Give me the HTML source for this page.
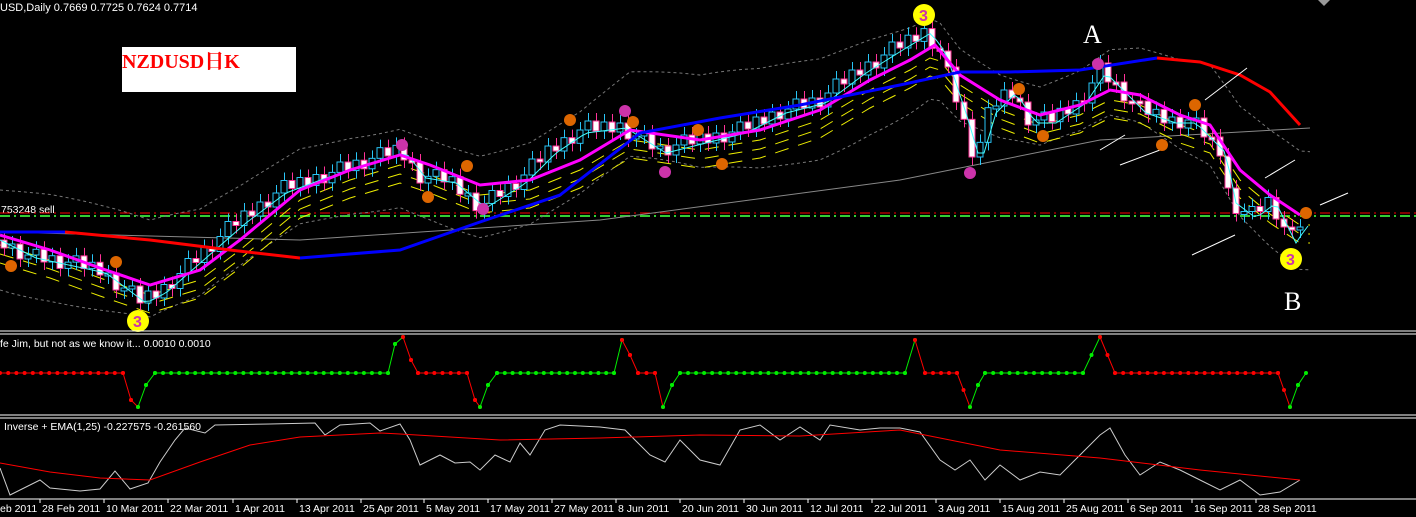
<!DOCTYPE html>
<html><head><meta charset="utf-8">
<style>
html,body{margin:0;padding:0;background:#000;width:1416px;height:517px;overflow:hidden}
svg{display:block}
text{font-family:"Liberation Sans","Noto Sans CJK SC",sans-serif;fill:#fff;font-size:10.5px}
</style></head><body>
<svg id="s" width="1416" height="517" viewBox="0 0 1416 517" xmlns="http://www.w3.org/2000/svg">
<rect width="1416" height="517" fill="#000"/>
<text x="0" y="11" style="font-size:11px">USD,Daily  0.7669 0.7725 0.7624 0.7714</text>
<rect x="122" y="47" width="174" height="45" fill="#fff"/>
<text x="122" y="68" style="font-family:'Liberation Serif','Noto Serif CJK SC',serif;font-size:20px;font-weight:bold;fill:#f00">NZDUSD日K</text>
<text x="1083" y="43" style="font-family:'Liberation Serif',serif;font-size:26px">A</text>
<text x="1284" y="310" style="font-family:'Liberation Serif',serif;font-size:26px">B</text>
<text x="1" y="213">753248 sell</text>
<line x1="0" y1="213" x2="1416" y2="213" stroke="#f00" stroke-dasharray="10,4,2,4"/>
<line x1="0" y1="216" x2="1416" y2="216" stroke="#3c3" stroke-width="2" stroke-dasharray="10,4,2,4"/>
<g id="bands"></g>
<g id="candles"></g>
<g id="mas"></g>
<g id="marks"></g>
<line x1="0" y1="331" x2="1416" y2="331" stroke="#fff"/>
<line x1="0" y1="334" x2="1416" y2="334" stroke="#fff"/>
<text x="0" y="347">fe Jim, but not as we know it...  0.0010 0.0010</text>
<g id="ind1"></g>
<line x1="0" y1="415" x2="1416" y2="415" stroke="#fff"/>
<line x1="0" y1="418" x2="1416" y2="418" stroke="#fff"/>
<text x="4" y="430">Inverse + EMA(1,25) -0.227575 -0.261560</text>
<g id="ind2"></g>
<line x1="0" y1="499" x2="1416" y2="499" stroke="#fff"/>
<g id="axis"></g>
<path d="M1318 0 L1330 0 L1324 6 Z" fill="#999"/>
</svg>
<script>
(function(){
var NS="http://www.w3.org/2000/svg";
function el(g,t,a){var e=document.createElementNS(NS,t);for(var k in a)e.setAttribute(k,a[k]);document.getElementById(g).appendChild(e);return e;}
function interp(p,x){for(var i=1;i<p.length;i++){if(x<=p[i][0]){var a=p[i-1],b=p[i];return a[1]+(b[1]-a[1])*(x-a[0])/(b[0]-a[0]);}}return p[p.length-1][1];}
function pts(p){return p.map(function(q){return q.join(",")}).join(" ")}
var price=[[0,240],[30,255],[100,270],[140,300],[160,290],[200,255],[240,220],[280,190],[320,175],[370,160],[400,150],[420,175],[450,180],[480,205],[520,180],[550,150],[580,130],[620,125],[660,150],[700,140],[740,130],[780,110],[820,100],[860,70],[900,45],[925,30],[940,50],[960,110],[975,160],[990,110],[1010,90],[1030,120],[1050,120],[1080,100],[1100,70],[1120,90],[1140,110],[1170,120],[1190,120],[1220,150],[1230,200],[1250,215],[1270,200],[1290,240],[1300,225],[1310,215]];
var mag=[[0,235],[50,250],[100,268],[150,285],[200,270],[240,240],[300,190],[350,170],[400,155],[430,165],[480,185],[530,180],[580,160],[630,130],[700,140],[760,130],[820,110],[870,80],[910,60],[935,45],[960,75],[1000,100],[1040,115],[1080,105],[1110,90],[1140,95],[1180,115],[1210,125],[1240,170],[1270,195],[1300,215]];
var ub=[],lb=[];
for(var x=0;x<=1310;x+=10){var m=interp(mag,x);ub.push([x,m-45-20*Math.sin(x/90)]);lb.push([x,m+40+15*Math.cos(x/70)]);}
el("bands","polyline",{points:pts(ub),fill:"none",stroke:"#777","stroke-dasharray":"3,3"});
el("bands","polyline",{points:pts(lb),fill:"none",stroke:"#777","stroke-dasharray":"3,3"});
el("bands","polyline",{points:"0,232 300,240 600,220 900,180 1100,140 1310,128",fill:"none",stroke:"#888"});
for(var k=0;k<3;k++){var q=[];for(var x=0;x<=1310;x+=10){q.push([x,interp(mag,x)+10+k*9]);}
el("bands","polyline",{points:pts(q),fill:"none",stroke:"#ee0","stroke-dasharray":"14,10"});}
var prev=interp(price,0);
for(var x=4;x<=1306;x+=8){var c=interp(price,x)+((x*37)%19-9);var o=prev;var t0=Math.min(o,c),b0=Math.max(o,c);if(b0-t0<3)b0=t0+3;
var isUp=c<o;var col=isUp?"#29c5f6":"#ff3399";
el("candles","line",{x1:x+0.5,y1:t0-8,x2:x+0.5,y2:b0+8,stroke:col});
el("candles","rect",{x:x-3,y:t0,width:6,height:b0-t0,fill:isUp?"#000":"#fff",stroke:col});prev=c;}
var cy=[];for(var x=0;x<=1310;x+=6)cy.push([x,interp(price,x-6)+3]);
el("mas","polyline",{points:pts(cy),fill:"none",stroke:"#4ff"});
el("mas","polyline",{points:pts(mag),fill:"none",stroke:"#f0f","stroke-width":3});
el("mas","polyline",{points:"0,232 65,232",fill:"none",stroke:"#00f","stroke-width":3});
el("mas","polyline",{points:"65,232 150,240 230,250 300,258",fill:"none",stroke:"#f00","stroke-width":3});
el("mas","polyline",{points:"300,258 400,250 480,222 560,195 640,133 720,118 800,105 900,85 960,72 1010,72 1080,70 1157,58",fill:"none",stroke:"#00f","stroke-width":3});
el("mas","polyline",{points:"1157,58 1200,62 1240,75 1270,92 1300,125",fill:"none",stroke:"#f00","stroke-width":3});
[[1205,100,1247,68],[1100,150,1125,135],[1120,165,1160,150],[1192,255,1235,235],[1265,178,1295,160],[1320,205,1348,193]].forEach(function(a){el("marks","line",{x1:a[0],y1:a[1],x2:a[2],y2:a[3],stroke:"#fff"});});
[[11,266,"#d60"],[116,262,"#d60"],[428,197,"#d60"],[467,166,"#d60"],[570,120,"#d60"],[633,122,"#d60"],[698,130,"#d60"],[722,164,"#d60"],[1019,89,"#d60"],[1043,136,"#d60"],[1162,145,"#d60"],[1195,105,"#d60"],[1306,213,"#d60"],[402,145,"#c3a"],[625,111,"#c3a"],[483,209,"#c3a"],[665,172,"#c3a"],[970,173,"#c3a"],[1098,64,"#c3a"]].forEach(function(m){el("marks","circle",{cx:m[0],cy:m[1],r:6,fill:m[2]});});
[[138,321],[924,15],[1291,259]].forEach(function(m){el("marks","circle",{cx:m[0],cy:m[1],r:11,fill:"#ff0"});var t=el("marks","text",{x:m[0]-5,y:m[1]+6,style:"fill:#c3a;font-size:16px;font-weight:bold"});t.textContent="3";});
var segs=[["r",[[0,373],[123,373],[131,400],[138,407]]],["g",[[138,407],[146,385],[155,373],[388,373],[395,344],[403,337]]],["r",[[403,337],[411,360],[418,373],[467,373],[475,400],[480,407]]],["g",[[480,407],[488,385],[497,373],[614,373],[622,340]]],["r",[[622,340],[630,355],[638,373],[655,373],[663,407]]],["g",[[663,407],[672,385],[680,373],[905,373],[915,340]]],["r",[[915,340],[925,373],[957,373],[970,407]]],["g",[[970,407],[978,385],[985,373],[1083,373],[1100,337]]],["r",[[1100,337],[1115,373],[1278,373],[1290,407]]],["g",[[1290,407],[1298,385],[1306,373]]]];
segs.forEach(function(s){var c=s[0]=="r"?"#f00":"#0e0";var p=s[1];el("ind1","polyline",{points:pts(p),fill:"none",stroke:c});
for(var i=0;i<p.length-1;i++){var a=p[i],b=p[i+1];var n=Math.max(1,Math.round((b[0]-a[0])/8));for(var j=0;j<=n;j++){el("ind1","circle",{cx:a[0]+(b[0]-a[0])*j/n,cy:a[1]+(b[1]-a[1])*j/n,r:2,fill:c});}}});
var wl=[[0,468],[10,495],[40,480],[50,488],[80,491],[100,489],[115,471],[130,489],[148,483],[160,462],[175,440],[185,428],[205,433],[215,425],[270,424],[315,423],[325,435],[340,425],[370,423],[380,431],[400,424],[410,440],[420,465],[440,455],[455,463],[470,462],[480,470],[495,455],[510,462],[520,443],[530,455],[545,430],[560,425],[600,427],[625,430],[650,455],[665,462],[680,440],[700,460],[720,465],[740,430],[760,425],[780,440],[800,427],[820,440],[830,425],[860,430],[880,428],[900,428],[920,432],[940,460],[955,470],[970,460],[985,480],[1000,465],[1020,480],[1040,472],[1060,475],[1080,455],[1100,435],[1110,428],[1125,455],[1140,475],[1160,462],[1180,470],[1200,480],[1220,490],[1240,480],[1260,495],[1280,492],[1300,480]];
el("ind2","polyline",{points:pts(wl),fill:"none",stroke:"#ccc"});
el("ind2","polyline",{points:"0,463 50,472 100,478 150,480 200,462 250,445 300,437 380,433 400,434 500,440 600,438 700,435 800,436 900,430 950,440 1000,450 1100,458 1200,470 1300,480",fill:"none",stroke:"#f00"});
var L=[["eb 2011",0],["28 Feb 2011",42],["10 Mar 2011",106],["22 Mar 2011",170],["1 Apr 2011",235],["13 Apr 2011",299],["25 Apr 2011",363],["5 May 2011",426],["17 May 2011",490],["27 May 2011",554],["8 Jun 2011",618],["20 Jun 2011",682],["30 Jun 2011",746],["12 Jul 2011",810],["22 Jul 2011",874],["3 Aug 2011",938],["15 Aug 2011",1002],["25 Aug 2011",1066],["6 Sep 2011",1130],["16 Sep 2011",1194],["28 Sep 2011",1258]];
L.forEach(function(l){var t=el("axis","text",{x:l[1],y:512});t.textContent=l[0];if(l[1]>0)el("axis","line",{x1:l[1]-2,y1:499,x2:l[1]-2,y2:503,stroke:"#fff"});});
})();
</script>
</body></html>
